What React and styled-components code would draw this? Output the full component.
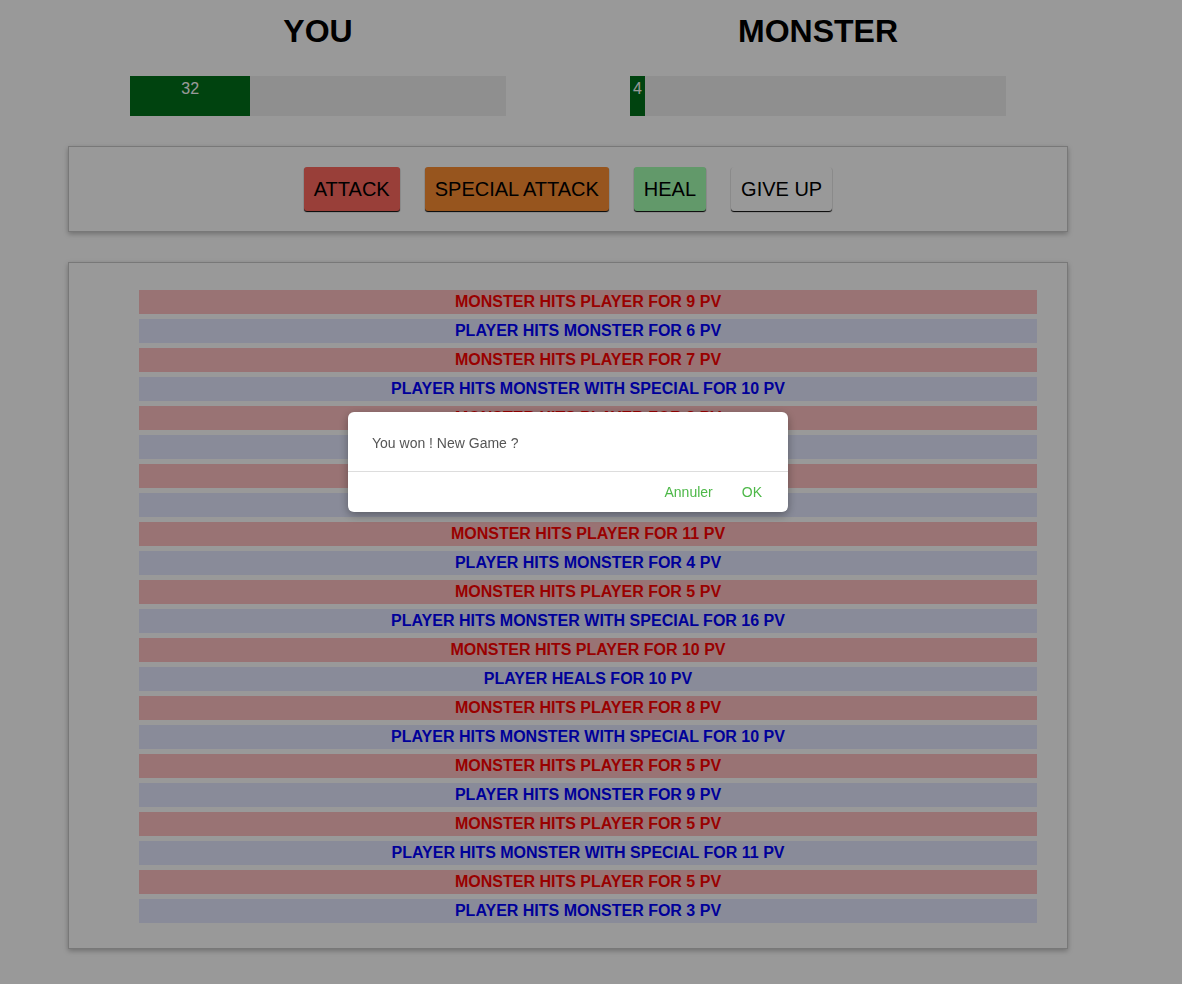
import React from 'react';
import styled, { createGlobalStyle } from 'styled-components';

const GlobalStyle = createGlobalStyle`
    body {
        margin: 0;
        background-color: #fff;
        font-family: "Liberation Sans", Arial, Helvetica, sans-serif;
    }
`

const Page = styled.div`
    width: 1000px;
    margin-left: 68px;
    padding-top: 13px;
    padding-bottom: 40px;
`

const Players = styled.div`
    display: grid;
    grid-template-columns: 1fr 1fr;
`

const PlayerColumn = styled.div`
    display: flex;
    flex-direction: column;
    align-items: center;
`

const Title = styled.h1`
    margin: 0 0 26px;
    font-size: 32px;
    font-weight: bold;
    color: #000;
    text-align: center;
`

const HealthBar = styled.div`
    width: 376px;
    height: 40px;
    background-color: #eee;
`

const HealthFill = styled.div`
    height: 100%;
    background-color: #00711a;
    color: #fff;
    font-size: 16px;
    line-height: 25px;
    text-align: center;
    white-space: nowrap;
`

const Box = styled.section`
    margin-top: 30px;
    border: 1px solid #c8c8c8;
    box-shadow: 0 2px 5px #bbb;
`

const Controls = styled(Box)`
    display: flex;
    justify-content: center;
    gap: 25px;
    padding: 20px;
`

const colors = {
    attack: '#ff695f',
    special: '#fc8e33',
    heal: '#a4ffb1',
    giveup: '#ffffff',
}

const Button = styled.button`
    height: 44px;
    padding: 0 10px;
    border: none;
    border-radius: 3px;
    background-color: ${props => colors[props.kind]};
    box-shadow: 0 1px 1px #000;
    font-family: "Liberation Sans", Arial, sans-serif;
    font-size: 20px;
    color: #000;
    cursor: pointer;
`

const LogBox = styled(Box)`
    padding: 27px 30px 25px;
`

const LogList = styled.ul`
    list-style: none;
    margin: 0;
    padding: 0 0 0 40px;
    display: flex;
    flex-direction: column;
    gap: 5px;
`

const LogItem = styled.li`
    height: 24px;
    line-height: 24px;
    text-align: center;
    font-size: 16px;
    font-weight: bold;
    color: ${props => props.player ? 'blue' : 'red'};
    background-color: ${props => props.player ? '#e4e8ff' : '#ffc0c1'};
`

const Overlay = styled.div`
    position: fixed;
    inset: 0;
    background-color: rgba(0, 0, 0, 0.4);
`

const Dialog = styled.div`
    position: absolute;
    left: 348px;
    top: 412px;
    width: 440px;
    background: #fff;
    border-radius: 6px;
    box-shadow: 0 3px 10px rgba(0, 0, 0, 0.35);
    font-family: "Liberation Sans", Arial, sans-serif;
`

const DialogBody = styled.div`
    padding: 22px 24px 18px;
    font-size: 14px;
    line-height: 19px;
    color: #555;
    border-bottom: 1px solid #ddd;
`

const DialogFooter = styled.div`
    height: 40px;
    display: flex;
    justify-content: flex-end;
    align-items: center;
    gap: 29px;
    padding-right: 26px;
`

const DialogButton = styled.button`
    border: none;
    background: none;
    padding: 0;
    font-family: inherit;
    font-size: 14px;
    color: #4db848;
    cursor: pointer;
`

const logs = [
    [false, 'MONSTER HITS PLAYER FOR 9 PV'],
    [true, 'PLAYER HITS MONSTER FOR 6 PV'],
    [false, 'MONSTER HITS PLAYER FOR 7 PV'],
    [true, 'PLAYER HITS MONSTER WITH SPECIAL FOR 10 PV'],
    [false, 'MONSTER HITS PLAYER FOR 8 PV'],
    [true, 'PLAYER HITS MONSTER FOR 5 PV'],
    [false, 'MONSTER HITS PLAYER FOR 6 PV'],
    [true, 'PLAYER HITS MONSTER FOR 7 PV'],
    [false, 'MONSTER HITS PLAYER FOR 11 PV'],
    [true, 'PLAYER HITS MONSTER FOR 4 PV'],
    [false, 'MONSTER HITS PLAYER FOR 5 PV'],
    [true, 'PLAYER HITS MONSTER WITH SPECIAL FOR 16 PV'],
    [false, 'MONSTER HITS PLAYER FOR 10 PV'],
    [true, 'PLAYER HEALS FOR 10 PV'],
    [false, 'MONSTER HITS PLAYER FOR 8 PV'],
    [true, 'PLAYER HITS MONSTER WITH SPECIAL FOR 10 PV'],
    [false, 'MONSTER HITS PLAYER FOR 5 PV'],
    [true, 'PLAYER HITS MONSTER FOR 9 PV'],
    [false, 'MONSTER HITS PLAYER FOR 5 PV'],
    [true, 'PLAYER HITS MONSTER WITH SPECIAL FOR 11 PV'],
    [false, 'MONSTER HITS PLAYER FOR 5 PV'],
    [true, 'PLAYER HITS MONSTER FOR 3 PV'],
]

const App = () => {
    const playerHealth = 32
    const monsterHealth = 4
    return (<>
        <GlobalStyle />
        <Page>
            <Players>
                <PlayerColumn>
                    <Title>YOU</Title>
                    <HealthBar>
                        <HealthFill style={{ width: `${playerHealth}%` }}>{playerHealth}</HealthFill>
                    </HealthBar>
                </PlayerColumn>
                <PlayerColumn>
                    <Title>MONSTER</Title>
                    <HealthBar>
                        <HealthFill style={{ width: `${monsterHealth}%` }}>{monsterHealth}</HealthFill>
                    </HealthBar>
                </PlayerColumn>
            </Players>
            <Controls>
                <Button kind="attack">ATTACK</Button>
                <Button kind="special">SPECIAL ATTACK</Button>
                <Button kind="heal">HEAL</Button>
                <Button kind="giveup">GIVE UP</Button>
            </Controls>
            <LogBox>
                <LogList>
                    {logs.map(([player, text], i) =>
                        <LogItem key={i} player={player ? 1 : 0}>{text}</LogItem>)}
                </LogList>
            </LogBox>
        </Page>
        <Overlay>
            <Dialog>
                <DialogBody>You won ! New Game ?</DialogBody>
                <DialogFooter>
                    <DialogButton>Annuler</DialogButton>
                    <DialogButton>OK</DialogButton>
                </DialogFooter>
            </Dialog>
        </Overlay>
    </>);
}

export default App;
